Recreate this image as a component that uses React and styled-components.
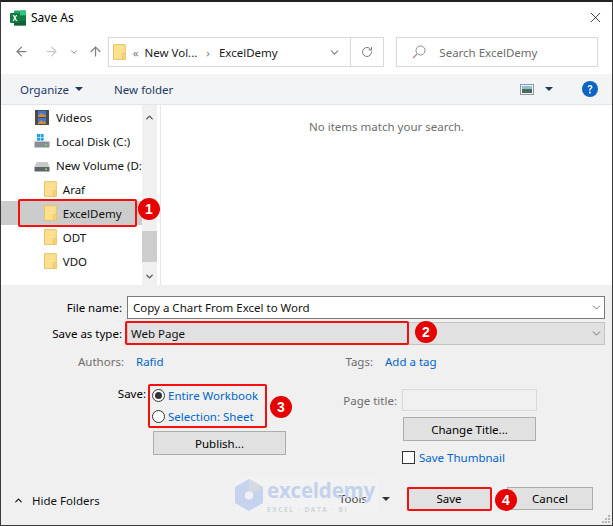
import React from 'react'
import styled, { createGlobalStyle } from 'styled-components'
import { ArrowLeft, ArrowRight, ArrowUp, ChevronDown, ChevronUp, RotateCw, X } from 'lucide-react'

const GlobalStyle = createGlobalStyle`
  html, body { margin: 0; padding: 0; background: #fff; }
  * { box-sizing: border-box; }
  svg { flex: none; }
  body { font-family: "Noto Sans", "Open Sans", sans-serif; font-size: 11.5px; color: #000; }
`

const Window = styled.div`
  position: relative;
  width: 613px;
  height: 526px;
  display: flex;
  flex-direction: column;
  border: 1px solid #3a3a3a;
  border-top: 2px solid #222;
  background: #fff;
  overflow: hidden;
`
const TitleBar = styled.div`
  height: 31px;
  display: flex;
  align-items: center;
  padding: 0 8px 0 9px;
  gap: 5px;
  font-size: 12px;
`
const TitleText = styled.span`
  flex: 1;
`
const NavBar = styled.div`
  height: 41px;
  display: flex;
  align-items: flex-start;
  padding: 4px 14px 0 13px;
  color: #8a8a8a;
`
const NavButtons = styled.div`
  width: 94px;
  display: flex;
  align-items: center;
  height: 29px;
`
const NavIcon = styled.span`
  display: flex;
  width: ${p => p.$w}px;
  color: ${p => p.$color || '#808080'};
`
const AddressBox = styled.div`
  width: 277px;
  height: 30px;
  border: 1px solid #d9d9d9;
  display: flex;
  align-items: center;
  padding-left: 4px;
  color: #1a1a1a;
`
const Crumb = styled.span`
  color: ${p => p.$muted ? '#7a7a7a' : '#1a1a1a'};
  margin: ${p => p.$margin || 0};
`
const AddressSpacer = styled.span`
  flex: 1;
`
const AddressAction = styled.span`
  height: 100%;
  width: ${p => p.$w}px;
  display: flex;
  align-items: center;
  justify-content: center;
  color: #7d7d7d;
  border-left: ${p => p.$divided ? '1px solid #d9d9d9' : 'none'};
`
const SearchBox = styled.div`
  width: 202px;
  height: 30px;
  margin-left: 12px;
  border: 1px solid #d9d9d9;
  display: flex;
  align-items: center;
  gap: 13px;
  padding-left: 15px;
  color: #6d6d6d;
`
const ToolBar = styled.div`
  height: 31px;
  background: #f3f4f6;
  border-bottom: 1px solid #e4e5e7;
  display: flex;
  align-items: center;
  padding: 0 14px 0 19px;
  color: #1e3a66;
`
const ToolLabel = styled.span`
  margin-left: ${p => p.$gap || 0}px;
`
const Caret = styled.span`
  width: 0;
  height: 0;
  border-left: 4px solid transparent;
  border-right: 4px solid transparent;
  border-top: 4px solid ${p => p.$color || '#1e3a66'};
  margin: ${p => p.$margin || 0};
`
const ToolSpacer = styled.span`
  flex: 1;
`
const Browser = styled.div`
  height: 180px;
  display: flex;
`
const Tree = styled.div`
  width: 141px;
  display: flex;
  flex-direction: column;
`
const TreeRow = styled.div`
  height: 24px;
  flex: none;
  display: flex;
  align-items: center;
  gap: ${p => p.$gap}px;
  padding-left: ${p => p.$indent}px;
  background: ${p => p.$selected ? '#cccccc' : 'transparent'};
  color: #111;
  white-space: nowrap;
  overflow: hidden;
`
const ScrollBar = styled.div`
  width: 15px;
  background: #f0f0f0;
  display: flex;
  flex-direction: column;
  align-items: center;
  color: #555;
`
const ScrollThumb = styled.div`
  width: 100%;
  height: 31px;
  margin-top: 102px;
  background: #cdcdcd;
`
const ScrollArrow = styled.span`
  height: ${p => p.$h}px;
  margin-top: ${p => p.$top || 0}px;
  display: flex;
  align-items: center;
`
const MainPane = styled.div`
  flex: 1;
  border-left: 1px solid #e6e6e6;
  margin-left: 3px;
  padding-top: 14px;
  text-align: center;
  color: #6d6d6d;
`
const Panel = styled.div`
  flex: 1;
  background: #f0f0f0;
  display: flex;
  flex-direction: column;
  padding-top: 11px;
`
const FormGrid = styled.div`
  display: grid;
  grid-template-columns: 121px 1fr;
  column-gap: 5px;
  row-gap: 3px;
  margin-right: 7px;
  align-items: center;
`
const FormLabel = styled.label`
  text-align: right;
`
const FieldBox = styled.div`
  height: 23px;
  display: flex;
  align-items: center;
  justify-content: space-between;
  padding: 0 1px 0 ${p => p.$combo ? 3 : 5}px;
  background: ${p => p.$combo ? '#e1e1e1' : '#fff'};
  border: 1px solid ${p => p.$combo ? '#c4c4c4' : '#7a7a7a'};
  color: #111;
`
const FieldArrow = styled.span`
  display: flex;
  color: #444;
`
const Details = styled.div`
  display: flex;
  margin-top: 6px;
`
const LeftColumn = styled.div`
  width: 329px;
`
const RightColumn = styled.div`
  flex: 1;
`
const MetaRow = styled.div`
  height: 20px;
  display: flex;
  align-items: center;
`
const MetaLabel = styled.span`
  width: ${p => p.$w}px;
  text-align: right;
  color: ${p => p.$strong ? '#000' : '#6d6d6d'};
`
const LinkText = styled.a`
  color: #0066cc;
  margin-left: ${p => p.$gap || 0}px;
`
const SaveBlock = styled.div`
  display: flex;
  margin-top: 15px;
`
const RadioStack = styled.div`
  display: flex;
  flex-direction: column;
  gap: 3px;
  margin-left: 6px;
`
const RadioRow = styled.div`
  height: 18px;
  display: flex;
  align-items: center;
  gap: 3px;
`
const Radio = styled.span`
  width: 13px;
  height: 13px;
  border-radius: 50%;
  border: 1px solid #333;
  background: #fff;
  display: flex;
  align-items: center;
  justify-content: center;
  &::after {
    content: '';
    display: ${p => p.$on ? 'block' : 'none'};
    width: 7px;
    height: 7px;
    border-radius: 50%;
    background: #333;
  }
`
const Button = styled.button`
  display: block;
  width: ${p => p.$w}px;
  height: ${p => p.$h || 24}px;
  margin: ${p => p.$margin || 0};
  background: #e1e1e1;
  border: 1px solid #adadad;
  font: inherit;
  color: #000;
  padding: 0;
`
const PageTitleRow = styled.div`
  display: flex;
  align-items: center;
  margin-top: 18px;
`
const DisabledInput = styled.div`
  width: 135px;
  height: 22px;
  margin-left: 5px;
  border: 1px solid #d9d9d9;
  background: #f0f0f0;
`
const CheckRow = styled.div`
  display: flex;
  align-items: center;
  gap: 4px;
  margin: 9px 0 0 72px;
`
const CheckBox = styled.span`
  width: 13px;
  height: 13px;
  background: #fff;
  border: 1px solid #333;
`
const Footer = styled.div`
  position: relative;
  margin-top: auto;
  height: 38px;
  display: flex;
  align-items: flex-start;
  padding: 0 19px 0 12px;
`
const HideFolders = styled.div`
  display: flex;
  align-items: center;
  gap: 8px;
  margin-top: 6px;
  width: 326px;
  color: #111;
`
const ToolsLabel = styled.div`
  width: 68px;
  margin-top: 4px;
  display: flex;
  align-items: center;
  color: #111;
`
const Grip = styled.svg`
  position: absolute;
  right: 1px;
  bottom: 1px;
`
const Watermark = styled.div`
  position: absolute;
  left: 234px;
  top: 475px;
  width: 143px;
  height: 36px;
  display: flex;
  align-items: center;
  gap: 4px;
  background: rgba(255, 255, 255, 0.18);
  pointer-events: none;
`
const WatermarkText = styled.div`
  display: flex;
  flex-direction: column;
  line-height: 1;
`
const WatermarkName = styled.span`
  font: 700 20.5px "Open Sans", sans-serif;
  color: #c3d2ec;
  letter-spacing: -0.2px;
`
const WatermarkTag = styled.span`
  font: 700 6.5px "Open Sans", sans-serif;
  color: #cfd3da;
  letter-spacing: 1.6px;
  margin-top: 1px;
`
const Callout = styled.div`
  position: absolute;
  left: ${p => p.$x}px;
  top: ${p => p.$y}px;
  width: ${p => p.$w}px;
  height: ${p => p.$h}px;
  border: 2px solid #f50f0f;
  border-radius: 2px;
  pointer-events: none;
`
const Badge = styled.div`
  position: absolute;
  left: ${p => p.$x - 11}px;
  top: ${p => p.$y - 11}px;
  width: 22px;
  height: 22px;
  border-radius: 50%;
  background: #e60000;
  color: #fff;
  font: 700 14px "Liberation Sans", sans-serif;
  display: flex;
  align-items: center;
  justify-content: center;
`

const ExcelIcon = () => (
  <svg width='16' height='16' viewBox='0 0 16 16'>
    <rect x='4' y='0.5' width='12' height='15' rx='1' fill='#21a366' />
    <rect x='10' y='0.5' width='6' height='5' fill='#33c481' />
    <rect x='10' y='5.5' width='6' height='5' fill='#107c41' />
    <rect x='4' y='10.5' width='12' height='5' fill='#185c37' />
    <rect x='0' y='3' width='10' height='10' rx='1' fill='#107c41' />
    <path d='M2.6 5l1.6 3-1.7 3h1.4l1-2 1 2h1.4L5.6 8l1.6-3H5.9l-.9 1.9L4 5z' fill='#fff' />
  </svg>
)

const Folder = ({ size = 16 }) => (
  <svg width={size * 0.8} height={size} viewBox='0 0 13 16'>
    <path d='M0.5 0.5h8l4 0v15h-12z' fill='#fbe08f' stroke='#e8c264' />
    <path d='M9.5 15.5v-6h3v6z' fill='#f5d477' stroke='#e8c264' strokeWidth='0.7' />
  </svg>
)

const Drive = () => (
  <svg width='16' height='14' viewBox='0 0 16 14'>
    <path d='M2.5 4h11L15.5 9h-15z' fill='#c9c9c9' />
    <rect x='0.5' y='9' width='15' height='4.5' fill='#5f6468' />
    <rect x='11' y='10.5' width='2' height='1.5' fill='#7fd66a' />
  </svg>
)

const LocalDisk = () => (
  <svg width='16' height='14' viewBox='0 0 16 14'>
    <rect x='3' y='0' width='3' height='3' fill='#18a0e8' />
    <rect x='6.6' y='0' width='3' height='3' fill='#18a0e8' />
    <rect x='3' y='3.6' width='3' height='3' fill='#18a0e8' />
    <rect x='6.6' y='3.6' width='3' height='3' fill='#18a0e8' />
    <rect x='0.5' y='7.5' width='15' height='6' fill='#8a8f94' />
    <rect x='11' y='10' width='2' height='1.5' fill='#7fd66a' />
  </svg>
)

const Film = () => (
  <svg width='14' height='15' viewBox='0 0 14 15'>
    <rect x='0' y='0' width='14' height='15' fill='#4c4c4c' />
    <rect x='3' y='1' width='8' height='6' fill='#3f78d6' />
    <rect x='3' y='8' width='8' height='6' fill='#3f78d6' />
    <path d='M3 6l3-3 2 2 1-1 2 2v1H3z' fill='#d88a35' />
    <path d='M3 13l3-3 2 2 1-1 2 2v1H3z' fill='#d88a35' />
  </svg>
)

const Lens = () => (
  <svg width='14' height='14' viewBox='0 0 14 14' fill='none'>
    <circle cx='8.5' cy='5.5' r='4.5' stroke='#8a8a8a' />
    <path d='M5 9l-4 4' stroke='#b78a7a' strokeWidth='1.2' />
  </svg>
)

const ViewIcon = () => (
  <svg width='14' height='11' viewBox='0 0 14 11'>
    <rect x='0.5' y='0.5' width='13' height='10' fill='#eef2f5' stroke='#8f9aa5' />
    <rect x='2' y='2' width='10' height='3' fill='#8fc0dc' />
    <rect x='2' y='5' width='10' height='4' fill='#4d6b55' />
  </svg>
)

const HelpIcon = () => (
  <svg width='16' height='16' viewBox='0 0 16 16'>
    <circle cx='8' cy='8' r='8' fill='#0b65c2' />
    <path d='M5.7 6.2C5.8 4.8 6.8 4 8.1 4c1.400 0 2.400.8 2.400 2 0 1-.6 1.500-1.300 2-.6.4-.8.7-.8 1.400H7c0-1.100.3-1.600 1.100-2.200.6-.4.9-.7.9-1.200 0-.5-.4-.8-.9-.8-.6 0-1 .4-1.100 1z' fill='#fff' />
    <circle cx='7.900' cy='11.500' r='1' fill='#fff' />
  </svg>
)

const LogoMark = () => (
  <svg width='28' height='32' viewBox='0 0 28 32'>
    <path d='M14 0l14 8v16l-14 8-14-8V8z' fill='#c5d3ee' />
    <path d='M14 0l14 8-14 8z' fill='#d4d9e2' />
    <path d='M10 14l4-2 4 2v5l-4 2-4-2z' fill='#eef0f4' />
  </svg>
)

const GripIcon = () => (
  <Grip width='10' height='10' viewBox='0 0 10 10'>
    <g fill='#b5b5b5'>
      <rect x='7' y='1' width='2' height='2' />
      <rect x='4' y='4' width='2' height='2' />
      <rect x='7' y='4' width='2' height='2' />
      <rect x='1' y='7' width='2' height='2' />
      <rect x='4' y='7' width='2' height='2' />
      <rect x='7' y='7' width='2' height='2' />
    </g>
  </Grip>
)

const folders = ['Araf', 'ExcelDemy', 'ODT', 'VDO']

const callouts = [
  { n: 1, box: [17, 197, 119, 28], badge: [148, 207] },
  { n: 2, box: [124, 319, 284, 24], badge: [425, 330] },
  { n: 3, box: [147, 382, 119, 44], badge: [280, 405] },
  { n: 4, box: [406, 485, 85, 24], badge: [505, 498] }
]

export default function App () {
  return (
    <>
      <GlobalStyle />
      <Window>
        <TitleBar>
          <ExcelIcon />
          <TitleText>Save As</TitleText>
          <X size={17} strokeWidth={1.1} color='#111' />
        </TitleBar>
        <NavBar>
          <NavButtons>
            <NavIcon $w={30}><ArrowLeft size={15} strokeWidth={2} /></NavIcon>
            <NavIcon $w={25} $color='#c8c8c8'><ArrowRight size={15} strokeWidth={2} /></NavIcon>
            <NavIcon $w={19} $color='#9a9a9a'><ChevronDown size={10} strokeWidth={2.5} /></NavIcon>
            <NavIcon $w={16}><ArrowUp size={15} strokeWidth={2} /></NavIcon>
          </NavButtons>
          <AddressBox>
            <Folder size={16} />
            <Crumb $muted $margin='0 6px 0 7px'>«</Crumb>
            <Crumb>New Vol...</Crumb>
            <Crumb $muted $margin='0 9px'>›</Crumb>
            <Crumb>ExcelDemy</Crumb>
            <AddressSpacer />
            <AddressAction $w={32}><ChevronDown size={13} strokeWidth={2} /></AddressAction>
            <AddressAction $w={33} $divided><RotateCw size={12} strokeWidth={2} /></AddressAction>
          </AddressBox>
          <SearchBox>
            <Lens />
            <span>Search ExcelDemy</span>
          </SearchBox>
        </NavBar>
        <ToolBar>
          <ToolLabel>Organize</ToolLabel>
          <Caret $margin='0 0 0 6px' />
          <ToolLabel $gap={31}>New folder</ToolLabel>
          <ToolSpacer />
          <ViewIcon />
          <Caret $margin='0 29px 0 11px' />
          <HelpIcon />
        </ToolBar>
        <Browser>
          <Tree>
            <TreeRow $indent={34} $gap={7}><Film />Videos</TreeRow>
            <TreeRow $indent={33} $gap={6}><LocalDisk />Local Disk (C:)</TreeRow>
            <TreeRow $indent={33} $gap={6}><Drive />New Volume (D:)</TreeRow>
            {folders.map(name => (
              <TreeRow key={name} $indent={43} $gap={6} $selected={name === 'ExcelDemy'}>
                <Folder size={16} />{name}
              </TreeRow>
            ))}
          </Tree>
          <ScrollBar>
            <ScrollArrow $h={24}><ChevronUp size={11} strokeWidth={3} /></ScrollArrow>
            <ScrollThumb />
            <ScrollArrow $h={18} $top={5}><ChevronDown size={11} strokeWidth={3} /></ScrollArrow>
          </ScrollBar>
          <MainPane>No items match your search.</MainPane>
        </Browser>
        <Panel>
          <FormGrid>
            <FormLabel>File name:</FormLabel>
            <FieldBox>
              Copy a Chart From Excel to Word
              <FieldArrow><ChevronDown size={13} strokeWidth={1.3} /></FieldArrow>
            </FieldBox>
            <FormLabel>Save as type:</FormLabel>
            <FieldBox $combo>
              Web Page
              <FieldArrow><ChevronDown size={13} strokeWidth={1.3} /></FieldArrow>
            </FieldBox>
          </FormGrid>
          <Details>
            <LeftColumn>
              <MetaRow>
                <MetaLabel $w={123}>Authors:</MetaLabel>
                <LinkText $gap={12}>Rafid</LinkText>
              </MetaRow>
              <SaveBlock>
                <MetaLabel $w={145} $strong>Save:</MetaLabel>
                <RadioStack>
                  <RadioRow><Radio $on /><LinkText>Entire Workbook</LinkText></RadioRow>
                  <RadioRow><Radio /><LinkText>Selection: Sheet</LinkText></RadioRow>
                </RadioStack>
              </SaveBlock>
              <Button $w={133} $margin='6px 0 0 152px'>Publish...</Button>
            </LeftColumn>
            <RightColumn>
              <MetaRow>
                <MetaLabel $w={43}>Tags:</MetaLabel>
                <LinkText $gap={12}>Add a tag</LinkText>
              </MetaRow>
              <PageTitleRow>
                <MetaLabel $w={67}>Page title:</MetaLabel>
                <DisabledInput />
              </PageTitleRow>
              <Button $w={133} $margin='6px 0 0 73px'>Change Title...</Button>
              <CheckRow>
                <CheckBox />
                <LinkText>Save Thumbnail</LinkText>
              </CheckRow>
            </RightColumn>
          </Details>
          <Footer>
            <HideFolders><ChevronUp size={11} strokeWidth={2.5} />Hide Folders</HideFolders>
            <ToolsLabel>Tools<Caret $color='#333' $margin='0 0 0 15px' /></ToolsLabel>
            <Button $w={84} $h={23}>Save</Button>
            <Button $w={86} $h={23} $margin='0 0 0 16px'>Cancel</Button>
            <GripIcon />
          </Footer>
        </Panel>
        <Watermark>
          <LogoMark />
          <WatermarkText>
            <WatermarkName>exceldemy</WatermarkName>
            <WatermarkTag>EXCEL · DATA · BI</WatermarkTag>
          </WatermarkText>
        </Watermark>
        {callouts.map(({ n, box, badge }) => (
          <React.Fragment key={n}>
            <Callout $x={box[0]} $y={box[1]} $w={box[2]} $h={box[3]} />
            <Badge $x={badge[0]} $y={badge[1]}>{n}</Badge>
          </React.Fragment>
        ))}
      </Window>
    </>
  )
}
